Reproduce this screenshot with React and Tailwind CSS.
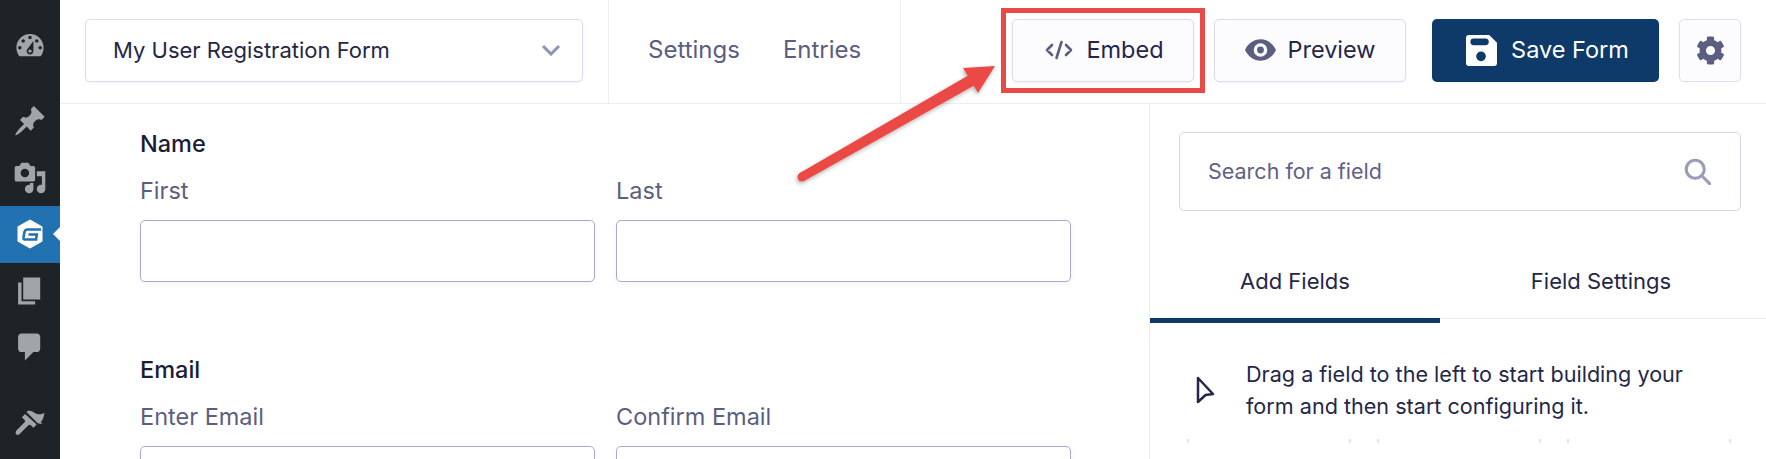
const Dash = ({ d, cls = "" }) => (
  <svg viewBox="0 0 20 20" className={"w-[34px] h-[34px] fill-[#a0a5aa] " + cls}>
    <path fillRule="evenodd" d={d} />
  </svg>
);

const icons = {
  dash: "M3.76 16h12.48c1.1-1.37 1.76-3.11 1.76-5 0-4.42-3.58-8-8-8s-8 3.58-8 8c0 1.89.66 3.63 1.76 5zM10 4c.55 0 1 .45 1 1s-.45 1-1 1-1-.45-1-1 .45-1 1-1zM6 6c.55 0 1 .45 1 1s-.45 1-1 1-1-.45-1-1 .45-1 1-1zm8 0c.55 0 1 .45 1 1s-.45 1-1 1-1-.45-1-1 .45-1 1-1zm-5.37 5.55L12 7v6c0 1.1-.9 2-2 2s-2-.9-2-2c0-.57.24-1.08.63-1.45zM4 10c.55 0 1 .45 1 1s-.45 1-1 1-1-.45-1-1 .45-1 1-1zm12 0c.55 0 1 .45 1 1s-.45 1-1 1-1-.45-1-1 .45-1 1-1zm-5 3c0-.55-.45-1-1-1s-1 .45-1 1 .45 1 1 1 1-.45 1-1z",
  pin: "M10.44 3.02l1.82-1.82 6.36 6.35-1.83 1.82c-1.05-.68-2.48-.57-3.41.36l-.75.75c-.92.93-1.04 2.35-.35 3.41l-1.83 1.82-2.41-2.41-2.8 2.79c-.42.42-3.38 2.71-3.8 2.29s1.86-3.39 2.28-3.81l2.79-2.79L4.1 9.36l1.83-1.82c1.05.69 2.48.57 3.4-.36l.75-.75c.93-.92 1.05-2.35.36-3.41z",
  media: "M13 11V4c0-.55-.45-1-1-1h-1.67L9 1H5L3.67 3H2c-.55 0-1 .45-1 1v7c0 .55.45 1 1 1h10c.55 0 1-.45 1-1zM7 4.5c1.38 0 2.5 1.12 2.5 2.5S8.38 9.5 7 9.5 4.5 8.38 4.5 7 5.62 4.5 7 4.5zM14 6h5v10.5c0 1.38-1.12 2.5-2.5 2.5S14 17.88 14 16.5s1.12-2.5 2.5-2.5c.17 0 .34.02.5.05V9h-3V6zm-4 8.05V13h2v3.5c0 1.38-1.12 2.5-2.5 2.5S7 17.88 7 16.5 8.12 14 9.5 14c.17 0 .34.02.5.05z",
  page: "M6 15V2h10v13H6zm-1 1h8v2H3V5h2v11z",
  comment: "M5 2h9c1.1 0 2 .9 2 2v7c0 1.1-.9 2-2 2h-2l-5 5v-5H5c-1.1 0-2-.9-2-2V4c0-1.1.9-2 2-2z",
  brush: "M18.500 4.500c-1.600 1-3 1.200-4.400.800-1.500-.500-2.500-1.700-4.200-1.900-.900-.100-1.500.200-2 .700l4.900 4.900 1.400 1.400c1 .800 2.300.900 3.300.300-.500-.100-.900-.300-1.200-.600 1.300-1 1.900-3.500 2.200-5.600zM7.100 5.300L5.200 7.200l1.600 1.600c.4.400.4 1 0 1.400l-3.900 3.900c-.9.700-1.500 1.700-1.300 2.600.2.800 1.200 1.100 2 .6.700-.4 1.100-1 1.600-1.500l3.900-3.900c.4-.4 1-.4 1.400 0l1.500 1.500 1.900-1.900z",
};

const SideItem = ({ d, mb = "" }) => (
  <div className={"h-[56.5px] flex items-center justify-center " + mb}>
    <Dash d={d} />
  </div>
);

const Sidebar = () => (
  <aside className="w-[60px] shrink-0 bg-[#1d2327] pt-[18px]">
    <SideItem d={icons.dash} mb="mb-[18.5px]" />
    <SideItem d={icons.pin} />
    <SideItem d={icons.media} />
    <div className="relative h-[56.5px] bg-[#2271b1] flex items-center justify-center">
      <svg viewBox="0 0 26 30" className="w-[26px] h-[30px]">
        <path d="M13 1.500l11.500 6.500v14l-11.500 6.500-11.500-6.500V8z" fill="#fff" stroke="#fff" strokeWidth="2" strokeLinejoin="round" />
        <path d="M24 10.500H10.500Q8 10.500 7.500 13L6.500 18.500Q6 20.500 8.500 20.500H19L19.800 15.500H11.500" fill="none" stroke="#2271b1" strokeWidth="2.600" />
      </svg>
      <span className="absolute right-0 top-[21px] border-y-[7px] border-r-[7px] border-y-transparent border-r-white" />
    </div>
    <SideItem d={icons.page} />
    <SideItem d={icons.comment} mb="mb-[18.5px]" />
    <SideItem d={icons.brush} />
  </aside>
);

const Btn = ({ children, w }) => (
  <button className={"h-[63px] rounded-[5px] border border-[#dcdcf0] bg-[#fcfcff] shadow-[0_1px_3px_rgba(40,40,120,0.06)] flex items-center justify-center text-[23.5px] text-[#242748] " + w}>
    {children}
  </button>
);

const Header = () => (
  <header className="h-[104px] shrink-0 flex border-b border-[#ecedf8] pb-[3px]">
    <div className="w-[549px] shrink-0 -mb-[3px] pb-[3px] border-r border-[#ecedf8] pl-[25px] flex items-center">
      <div className="w-[498px] h-[63px] rounded-[5px] border border-[#dcdcf0] bg-white shadow-[0_1px_3px_rgba(40,40,120,0.06)] flex items-center justify-between pl-[27px] pr-[21px] text-[22px] text-[#242748]">
        <span>My User Registration Form</span>
        <svg viewBox="0 0 20 12" className="w-[20px] h-[12px] fill-none stroke-[#9092b2] stroke-[3]">
          <path d="M2 2l8 8 8-8" />
        </svg>
      </div>
    </div>
    <nav className="w-[292px] shrink-0 -mb-[3px] pb-[3px] border-r border-[#ecedf8] pl-[39px] flex items-center gap-[43px] text-[24px] text-[#5b5e80]">
      <span>Settings</span>
      <span>Entries</span>
    </nav>
    <div className="flex-1 flex items-center pl-[111px] pr-[25px]">
      <div className="relative mr-[20px]">
        <Btn w="w-[182px] pl-[3px]">
          <svg viewBox="0 0 28 20" className="w-[28px] h-[20px] mr-[13px] fill-none stroke-[#5b5e80] stroke-[2.6]" strokeLinecap="round" strokeLinejoin="round">
            <path d="M7 5l-5 5 5 5M21 5l5 5-5 5M16.500 2l-5 16" />
          </svg>
          Embed
        </Btn>
        <div className="absolute left-[-11px] top-[-11px] w-[204px] h-[85px] border-[5px] border-[#ea4a45]" />
      </div>
      <Btn w="w-[192px] mr-[26px] pl-[1px]">
        <svg viewBox="0 0 32 22" className="w-[31px] h-[22px] mr-[11px]">
          <path fillRule="evenodd" fill="#5b5e80" d="M16 0C9 0 3.200 4.400 0 11c3.200 6.600 9 11 16 11s12.800-4.400 16-11C28.800 4.400 23 0 16 0zm0 4a7 7 0 1 1 0 14 7 7 0 0 1 0-14zm0 3.500a3.500 3.500 0 1 0 0 7 3.500 3.500 0 0 0 0-7z" />
        </svg>
        Preview
      </Btn>
      <button className="w-[227px] h-[63px] pl-[4px] rounded-[5px] bg-[#0e3a6a] flex items-center justify-center text-[23.5px] text-white mr-[20px]">
        <svg viewBox="0 0 32 32" className="w-[31px] h-[31px] mr-[14px]">
          <path fillRule="evenodd" fill="#fff" d="M3 0h21l8 8v21a3 3 0 0 1-3 3H3a3 3 0 0 1-3-3V3a3 3 0 0 1 3-3zm5 3.500a2.500 2.500 0 0 0 0 7h12a2.500 2.500 0 0 0 0-7zM15.500 17a5 5 0 1 0 0 10 5 5 0 0 0 0-10z" />
        </svg>
        Save Form
      </button>
      <button className="w-[62px] h-[63px] rounded-[5px] border border-[#dcdcf0] bg-[#fcfcff] flex items-center justify-center">
        <svg viewBox="0 0 512 512" className="w-[29px] h-[29px] fill-[#5b5e80]">
          <path d="M487.400 315.700l-42.600-24.600c4.300-23.200 4.300-47 0-70.200l42.600-24.600c4.900-2.800 7.100-8.600 5.500-14-11.100-35.600-30-67.800-54.700-94.600-3.800-4.100-10-5.100-14.800-2.300L380.800 110c-17.900-15.400-38.500-27.300-60.800-35.100V25.800c0-5.600-3.900-10.500-9.400-11.700-36.700-8.200-74.300-7.800-109.200 0-5.500 1.200-9.400 6.100-9.400 11.700V75c-22.200 7.900-42.800 19.800-60.800 35.100L88.700 85.500c-4.900-2.800-11-1.900-14.800 2.300-24.700 26.700-43.600 58.900-54.700 94.600-1.700 5.400.6 11.200 5.500 14L67.300 221c-4.300 23.200-4.300 47 0 70.200l-42.600 24.600c-4.900 2.800-7.100 8.600-5.500 14 11.100 35.600 30 67.800 54.700 94.600 3.800 4.100 10 5.100 14.800 2.300l42.600-24.600c17.900 15.400 38.500 27.300 60.800 35.100v49.200c0 5.600 3.900 10.500 9.400 11.700 36.700 8.200 74.300 7.800 109.200 0 5.500-1.200 9.400-6.100 9.400-11.700v-49.200c22.200-7.900 42.800-19.800 60.800-35.100l42.600 24.600c4.900 2.800 11 1.900 14.800-2.300 24.700-26.700 43.600-58.900 54.700-94.600 1.500-5.500-.7-11.300-5.600-14.100zM256 336c-44.100 0-80-35.900-80-80s35.900-80 80-80 80 35.900 80 80-35.900 80-80 80z" />
        </svg>
      </button>
    </div>
  </header>
);

const Field = ({ label }) => (
  <div className="w-[455px]">
    <div className="text-[23.5px] leading-[30px] text-[#5b5e80] mb-[14px]">{label}</div>
    <div className="h-[62px] rounded-[5px] border border-[#a9a9cc] bg-white shadow-[0_2px_6px_rgba(60,60,160,0.06)]" />
  </div>
);

const Group = ({ title, a, b, cls = "" }) => (
  <section className={cls}>
    <h3 className="text-[23.5px] leading-[30px] font-medium text-[#1b1d38] mb-[17px]">{title}</h3>
    <div className="flex gap-[21px]">
      <Field label={a} />
      <Field label={b} />
    </div>
  </section>
);

const Panel = () => (
  <div className="w-[617px] shrink-0 border-l border-[#ecedf8] flex flex-col">
    <div className="mt-[28px] ml-[29px] mr-[25px] h-[79px] shrink-0 rounded-[5px] border border-[#d5d5ea] flex items-center justify-between pl-[28px] pr-[29px] text-[21.5px] text-[#5f6285]">
      <span>Search for a field</span>
      <svg viewBox="0 0 24 24" className="w-[27px] h-[27px] fill-none stroke-[#9a9cb8] stroke-[2.800]" strokeLinecap="round">
        <circle cx="10" cy="10" r="8" />
        <path d="M16 16l7 7" />
      </svg>
    </div>
    <div className="mt-[23px] h-[85px] shrink-0 flex border-b border-[#ecedf8] text-[22px] text-[#242748]">
      <div className="w-[290px] h-[89px] pt-[11px] border-b-[5px] border-[#0e3a6a] flex items-center justify-center">Add Fields</div>
      <div className="flex-1 h-[84px] pt-[11px] flex items-center justify-center pr-[4px]">Field Settings</div>
    </div>
    <div className="flex items-center pl-[46px] pt-[39px] pr-[30px] text-[21.6px] leading-[32px] text-[#242748]">
      <svg viewBox="0 0 19 28" className="w-[19px] h-[28px] mr-[31px] fill-none stroke-[#242748] stroke-[2.500] shrink-0">
        <path d="M2 2l15 16-7.500 1L2 26z" strokeLinejoin="round" />
      </svg>
      <p>Drag a field to the left to start building your<br />form and then start configuring it.</p>
    </div>
    <div className="mt-[17px] ml-[37px] grid grid-cols-3 gap-[26px] w-[544px] mr-auto">
      <div className="h-[4px] border-x-2 border-[#e2e2f2]" />
      <div className="h-[4px] border-x-2 border-[#e2e2f2]" />
      <div className="h-[4px] border-x-2 border-[#e2e2f2]" />
    </div>
  </div>
);

export default function App() {
  return (
    <div className="relative w-[1766px] h-[459px] overflow-hidden bg-white flex font-['Inter',sans-serif]">
      <Sidebar />
      <main className="flex-1 flex flex-col min-w-0">
        <Header />
        <div className="flex-1 flex min-h-0">
          <div className="flex-1 pl-[80px] pt-[25px]">
            <Group title="Name" a="First" b="Last" />
            <Group title="Email" a="Enter Email" b="Confirm Email" cls="mt-[73px]" />
          </div>
          <Panel />
        </div>
      </main>
      <svg viewBox="0 0 1766 459" className="absolute inset-0 pointer-events-none w-[1766px] h-[459px]">
        <defs>
          <filter id="s" x="-20%" y="-20%" width="140%" height="140%">
            <feDropShadow dx="-1" dy="2" stdDeviation="2" floodColor="#000" floodOpacity="0.3" />
          </filter>
        </defs>
        <g filter="url(#s)" fill="#ea4a45">
          <circle cx="802" cy="177" r="4.500" />
          <path d="M799.800 173 L804.200 181 L975 85 L969 75 Z" />
          <path d="M995 66 L963 68 L978 93 Z" />
        </g>
      </svg>
    </div>
  );
}
